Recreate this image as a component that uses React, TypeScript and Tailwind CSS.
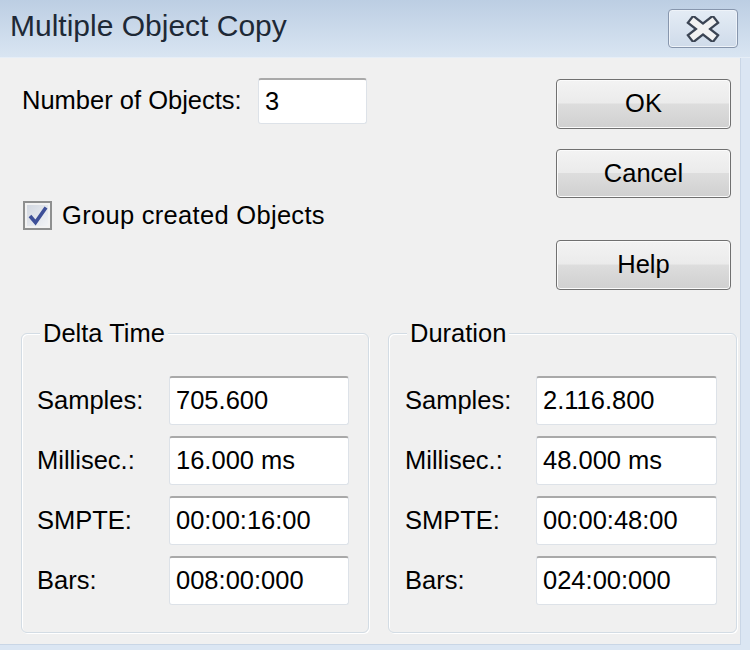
import React from "react";

const font = { fontFamily: '"Liberation Sans", Arial, sans-serif' };

function Field({ value, w, h }: { value: string; w: string; h: string }) {
  return (
    <div
      className={`${w} ${h} bg-white border border-[#dde2e8] border-t-2 border-t-[#a9a9a9] rounded-[3px] flex items-center pl-[6px] text-[25.5px] leading-none text-black`}
    >
      {value}
    </div>
  );
}

function Button({ label, h, extra }: { label: string; h: string; extra?: string }) {
  return (
    <div
      className={`w-[175px] ${h} ${extra ?? ""} rounded-[4px] border border-[#707070] shadow-[inset_0_0_0_1px_#fbfbfb] bg-[linear-gradient(to_bottom,#f3f3f3_0%,#ebebeb_48%,#dddddd_50%,#d0d0d0_100%)] flex items-center justify-center text-[25.5px] leading-none text-black`}
    >
      {label}
    </div>
  );
}

function Group({
  title,
  rows,
  width,
  pl,
  labelW,
  inputW,
}: {
  title: string;
  rows: [string, string][];
  width: string;
  pl: string;
  labelW: string;
  inputW: string;
}) {
  return (
    <div
      className={`${width} h-[300px] flex flex-col border border-[#d3dce4] rounded-[6px] shadow-[inset_1px_1px_0_#ffffff,1px_1px_0_#ffffff]`}
    >
      <span className="self-start ml-[18px] -mt-[16px] px-[3px] bg-[#f0f0f0] text-[25.5px] leading-[30px] text-black">
        {title}
      </span>
      <div className={`flex flex-col gap-[11px] mt-[28px] ${pl}`}>
        {rows.map(([l, v]) => (
          <div key={l} className="flex items-center">
            <div className={`${labelW} text-[25.5px] leading-none text-black`}>{l}</div>
            <Field value={v} w={inputW} h="h-[49px]" />
          </div>
        ))}
      </div>
    </div>
  );
}

export default function App() {
  return (
    <div className="w-[750px] h-[650px] flex flex-col bg-[#dbe6f3] overflow-hidden" style={font}>
      {/* title bar */}
      <div className="h-[58px] shrink-0 flex justify-between bg-[linear-gradient(to_bottom,#bccee3,#d9e5f2)] border-b border-[#e6eef7]">
        <span className="ml-[10px] mt-[11px] text-[30px] leading-[30px] text-[#1e2936]">
          Multiple Object Copy
        </span>
        <div className="mr-[12px] mt-[9px] w-[70px] h-[39px] rounded-[4px] border border-[#8796ad] shadow-[inset_0_0_0_1px_#eef3f9] bg-[linear-gradient(to_bottom,#e4ecf5,#cfdbea)] flex items-center justify-center">
          <svg width="34" height="26" viewBox="0 0 34 26">
            <g strokeLinecap="square">
              <line x1="8" y1="6" x2="26" y2="20" stroke="#3b4453" strokeWidth="11" />
              <line x1="26" y1="6" x2="8" y2="20" stroke="#3b4453" strokeWidth="11" />
              <line x1="8" y1="6" x2="26" y2="20" stroke="#f2f2f2" strokeWidth="6.5" />
              <line x1="26" y1="6" x2="8" y2="20" stroke="#f2f2f2" strokeWidth="6.5" />
            </g>
          </svg>
        </div>
      </div>

      <div className="flex flex-1">
        {/* client area */}
        <div className="w-[741px] h-[587px] bg-[#f0f0f0] flex flex-col border-r border-b border-[#c9d6e6]">
          <div className="flex justify-between pl-[22px] pr-[9px]">
            <div className="flex flex-col pt-[20px]">
              <div className="flex items-center">
                <span className="w-[236px] text-[25.5px] leading-none text-black">Number of Objects:</span>
                <Field value="3" w="w-[109px]" h="h-[46px]" />
              </div>
              <div className="flex items-center gap-[10px] mt-[77px] pl-[1px]">
                <div className="w-[29px] h-[29px] border-2 border-[#8e8f8f] bg-[linear-gradient(135deg,#cfd5df,#f4f5f7)] shadow-[inset_0_0_0_2px_#f2f2f2] flex items-center justify-center">
                  <svg width="22" height="22" viewBox="0 0 22 22">
                    <path d="M3 11 L8.5 17.5 L19 2.5" fill="none" stroke="#3d4f98" strokeWidth="3.6" strokeLinejoin="miter" />
                  </svg>
                </div>
                <span className="text-[25.5px] tracking-[0.3px] leading-none text-black">Group created Objects</span>
              </div>
            </div>
            <div className="flex flex-col pt-[21px]">
              <Button label="OK" h="h-[50px]" />
              <Button label="Cancel" h="h-[49px]" extra="mt-[20px]" />
              <Button label="Help" h="h-[50px]" extra="mt-[42px]" />
            </div>
          </div>

          <div className="flex gap-[19px] pl-[21px] mt-[43px]">
            <Group
              title="Delta Time"
              width="w-[348px]"
              pl="pl-[15px]"
              labelW="w-[132px]"
              inputW="w-[180px]"
              rows={[
                ["Samples:", "705.600"],
                ["Millisec.:", "16.000 ms"],
                ["SMPTE:", "00:00:16:00"],
                ["Bars:", "008:00:000"],
              ]}
            />
            <Group
              title="Duration"
              width="w-[349px]"
              pl="pl-[16px]"
              labelW="w-[131px]"
              inputW="w-[181px]"
              rows={[
                ["Samples:", "2.116.800"],
                ["Millisec.:", "48.000 ms"],
                ["SMPTE:", "00:00:48:00"],
                ["Bars:", "024:00:000"],
              ]}
            />
          </div>
        </div>
        <div className="flex-1" />
      </div>
    </div>
  );
}
